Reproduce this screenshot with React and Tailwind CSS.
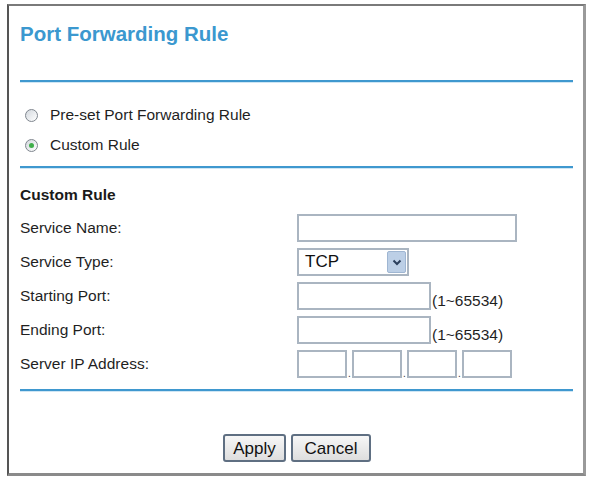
import React, { useState } from "react";

const Divider = ({ className = "" }) => (
  <div className={`h-[3px] border-t-2 border-[#3f98cf] bg-[#cfe6f4] ${className}`} />
);

const Radio = ({ checked, label, onClick }) => (
  <button
    type="button"
    onClick={onClick}
    className="flex h-[30px] w-full items-center text-left"
  >
    <span className="ml-[5px] flex h-[13px] w-[13px] items-center justify-center rounded-full border-[1.5px] border-[#7f868e] bg-gradient-to-br from-[#d3d8de] to-white">
      {checked && <span className="h-[5px] w-[5px] rounded-full bg-[#3fae4a]" />}
    </span>
    <span className="ml-[12px] text-[15.5px] text-[#1f1f1f]">{label}</span>
  </button>
);

const Row = ({ label, children }) => (
  <div className="flex h-[28px] items-center">
    <span className="w-[277px] text-[15.5px] text-[#1f1f1f]">{label}</span>
    {children}
  </div>
);

const Box = ({ className = "" }) => (
  <input
    type="text"
    className={`h-[28px] border-2 border-[#aab5c1] bg-white outline-none ${className}`}
  />
);

const Dot = () => (
  <span className="w-[5px] text-center text-[10px] leading-[8px] text-[#333]">.</span>
);

export default function App() {
  const [mode, setMode] = useState("custom");

  return (
    <div className="h-[479px] w-[590px] bg-white pl-[7px] pt-[4px] font-['Liberation_Sans',Arial,sans-serif]">
      <div className="h-[472px] w-[579px] border-b-[3px] border-l-2 border-r-[3px] border-t-2 border-b-[#8a8a8a] border-l-[#555] border-r-[#9a9a9a] border-t-[#7a7a7a] pl-[11px] pr-[10px]">
        {/* Title */}
        <h1 className="mt-[16px] h-[23px] text-[20.5px] font-bold leading-[23px] text-[#3b98cf]">
          Port Forwarding Rule
        </h1>

        <Divider className="mt-[35px]" />

        {/* Rule type */}
        <div className="mt-[17px]">
          <Radio
            checked={mode === "preset"}
            label="Pre-set Port Forwarding Rule"
            onClick={() => setMode("preset")}
          />
          <Radio
            checked={mode === "custom"}
            label="Custom Rule"
            onClick={() => setMode("custom")}
          />
        </div>

        <Divider className="mt-[6px]" />

        {/* Custom rule form */}
        <div className="mt-[16px] h-[20px] text-[15.5px] font-bold leading-[20px] text-[#1a1a1a]">
          Custom Rule
        </div>

        <div className="mt-[9px] flex flex-col gap-[6px]">
          <Row label="Service Name:">
            <Box className="w-[220px]" />
          </Row>

          <Row label="Service Type:">
            <div className="flex h-[28px] w-[112px] items-center justify-between border-2 border-[#aab5c1] bg-white pl-[6px] pr-[1px]">
              <span className="text-[17px] text-[#111]">TCP</span>
              <span className="flex h-[22px] w-[19px] items-center justify-center rounded-[2px] border border-[#9fb6d2] bg-[#bccfe6]">
                <svg width="10" height="7" viewBox="0 0 10 7">
                  <path d="M1.5 1.5 L5 5 L8.5 1.5" fill="none" stroke="#2b3f5c" strokeWidth="2" />
                </svg>
              </span>
            </div>
          </Row>

          <Row label="Starting Port:">
            <div className="flex h-[28px] items-end">
              <Box className="w-[134px]" />
              <span className="mb-[1px] ml-[1px] text-[15.5px] leading-[17px] text-[#1f1f1f]">(1~65534)</span>
            </div>
          </Row>

          <Row label="Ending Port:">
            <div className="flex h-[28px] items-end">
              <Box className="w-[134px]" />
              <span className="mb-[1px] ml-[1px] text-[15.5px] leading-[17px] text-[#1f1f1f]">(1~65534)</span>
            </div>
          </Row>

          <Row label="Server IP Address:">
            <div className="flex h-[28px] items-end">
              <Box className="w-[50px]" />
              <Dot />
              <Box className="w-[50px]" />
              <Dot />
              <Box className="w-[50px]" />
              <Dot />
              <Box className="w-[50px]" />
            </div>
          </Row>
        </div>

        <Divider className="mt-[11px]" />

        {/* Actions */}
        <div className="mt-[42px] flex justify-center gap-[5px] pl-[1px]">
          <button
            type="button"
            className="h-[28px] w-[63px] rounded-[3px] border-2 border-[#5f6f82] bg-gradient-to-b from-[#f7f7f7] to-[#dedede] text-[17px] text-[#111]"
          >
            Apply
          </button>
          <button
            type="button"
            className="h-[28px] w-[80px] rounded-[3px] border-2 border-[#5f6f82] bg-gradient-to-b from-[#f7f7f7] to-[#dedede] text-[17px] text-[#111]"
          >
            Cancel
          </button>
        </div>
      </div>
    </div>
  );
}
